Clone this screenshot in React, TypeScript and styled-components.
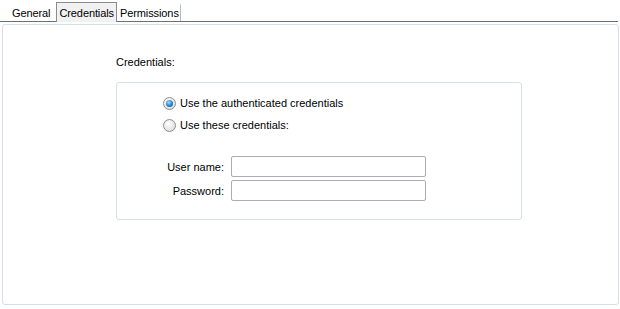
import { FC } from 'react';
import styled, { createGlobalStyle } from 'styled-components';

const GlobalStyle = createGlobalStyle`
   html, body {
      margin: 0;
      padding: 0;
      background: #ffffff;
   }
   body {
      font-family: "Liberation Sans", Arial, sans-serif;
      font-size: 11px;
      color: #000;
   }
`;

const Window = styled.div`
   width: 620px;
   height: 309px;
   box-sizing: border-box;
   display: flex;
   flex-direction: column;
`;

const TabBar = styled.div`
   display: flex;
   align-items: flex-end;
   height: 22px;
   box-sizing: border-box;
   padding-left: 8px;
   margin-right: 2px;
   border-bottom: 1px solid #6f6f6f;
`;

const Tab = styled.div<{ $active?: boolean; $first?: boolean }>`
   box-sizing: border-box;
   height: ${p => (p.$active ? '20px' : '17px')};
   margin-bottom: ${p => (p.$active ? '-1px' : '0')};
   padding: ${p => (p.$active ? '3px 2px 0 2px' : p.$first ? '1px 5px 0 3px' : '1px 1px 0 2px')};
   line-height: 14px;
   letter-spacing: -0.1px;
   background: ${p => (p.$active ? '#f1f1f1' : 'transparent')};
   border: 1px solid ${p => (p.$active ? '#898c95' : 'transparent')};
   border-bottom: none;
   border-right-color: ${p => (p.$active ? '#898c95' : p.$first ? 'transparent' : '#b8b8b8')};
   white-space: nowrap;
`;

const Panel = styled.div`
   margin: 2px 1px 4px 2px;
   flex: 1;
   border: 1px solid #d5dfe5;
   border-radius: 3px;
   padding: 30px 0 0 113px;
`;

const SectionLabel = styled.div`
   line-height: 14px;
   margin-bottom: 13px;
`;

const GroupBox = styled.div`
   width: 406px;
   height: 138px;
   box-sizing: border-box;
   border: 1px solid #d5dfe5;
   border-radius: 3px;
   padding: 12px 0 0 0;
`;

const RadioRow = styled.label`
   display: flex;
   align-items: center;
   gap: 4px;
   height: 16px;
   margin-left: 46px;
   margin-bottom: 6px;
   line-height: 14px;
`;

const RadioDot = styled.span<{ $checked?: boolean }>`
   position: relative;
   width: 13px;
   height: 13px;
   box-sizing: border-box;
   border-radius: 50%;
   border: 1px solid #8e8f8f;
   background: radial-gradient(circle at 40% 35%, #ffffff 0%, #e8e8e8 55%, #cfcfcf 100%);

   &::after {
      content: '';
      display: ${p => (p.$checked ? 'block' : 'none')};
      position: absolute;
      left: 2px;
      top: 2px;
      width: 7px;
      height: 7px;
      border-radius: 50%;
      background: radial-gradient(circle at 40% 35%, #9fe2ff 0%, #2a8ad4 50%, #0f3f7a 100%);
   }
`;

const FormGrid = styled.div`
   display: grid;
   grid-template-columns: 107px 195px;
   column-gap: 7px;
   row-gap: 3px;
   align-items: center;
   margin-top: 23px;
`;

const FieldLabel = styled.span`
   text-align: right;
   line-height: 14px;
`;

const TextBox = styled.input`
   width: 195px;
   height: 21px;
   box-sizing: border-box;
   border: 1px solid #abadb3;
   border-radius: 2px;
   background: #fff;
   font-family: inherit;
   font-size: 11px;
   padding: 0 3px;
   outline: none;
`;

const App: FC = () => (
   <Window>
      <GlobalStyle />
      <TabBar>
         <Tab $first>General</Tab>
         <Tab $active>Credentials</Tab>
         <Tab>Permissions</Tab>
      </TabBar>
      <Panel>
         <SectionLabel>Credentials:</SectionLabel>
         <GroupBox>
            <RadioRow><RadioDot $checked />Use the authenticated credentials</RadioRow>
            <RadioRow><RadioDot />Use these credentials:</RadioRow>
            <FormGrid>
               <FieldLabel>User name:</FieldLabel>
               <TextBox type="text" />
               <FieldLabel>Password:</FieldLabel>
               <TextBox type="password" />
            </FormGrid>
         </GroupBox>
      </Panel>
   </Window>
);

export default App;
